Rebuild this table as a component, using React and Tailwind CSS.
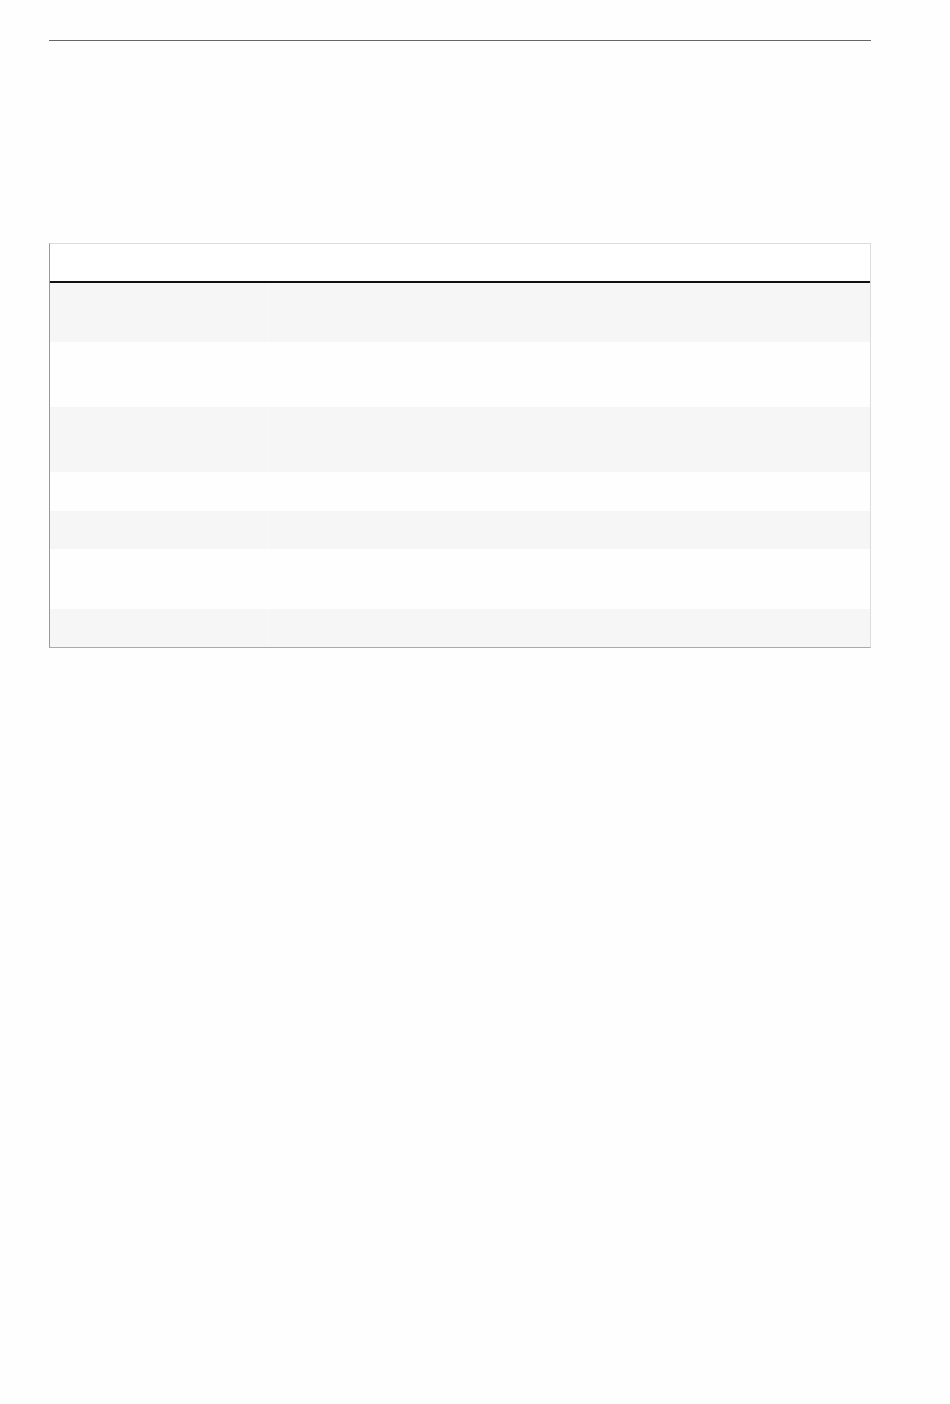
import React from "react";

const rows = [59, 65, 65, 39, 38, 60, 38];

export default function App() {
  return (
    <div className="min-h-[1404px] bg-[#fefefe] px-[49px] pt-[40px] font-['Liberation_Sans',sans-serif]">
      <div className="w-[822px] border-t border-[#666]" />
      <div className="mt-[202px] w-[822px] border-t border-r border-t-[#ddd] border-r-[#ddd] border-l border-l-[#999] border-b border-b-[#aaa]">
        <div className="h-[39px] border-b-2 border-[#111] bg-white" />
        {rows.map((h, i) => (
          <div
            key={i}
            className={`flex ${i % 2 === 0 ? "bg-[#f6f6f6]" : "bg-[#fefefe]"}`}
            style={{ height: h }}
          >
            <div className="w-[219px] border-r border-white/30" />
            <div className="flex-1" />
          </div>
        ))}
      </div>
    </div>
  );
}
